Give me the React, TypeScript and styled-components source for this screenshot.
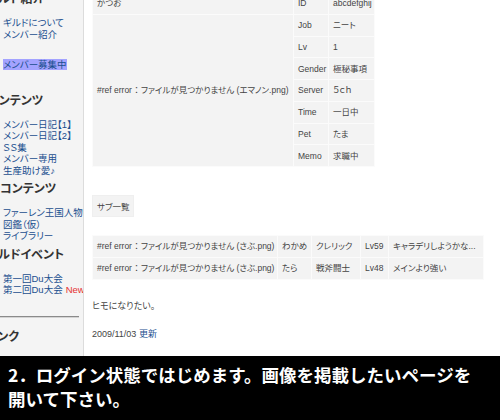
import styled, { createGlobalStyle } from "styled-components";

const GlobalStyle = createGlobalStyle`
  html, body {
    margin: 0;
    padding: 0;
    background: #fff;
  }
  body {
    width: 500px;
    height: 420px;
    overflow: hidden;
    font-family: "Liberation Sans", "Noto Sans CJK JP", sans-serif;
    color: #444;
  }
`;

const Screen = styled.div`
  width: 500px;
  height: 420px;
  display: flex;
  flex-direction: column;
  overflow: hidden;
`;

const Page = styled.div`
  display: flex;
  flex: none;
  height: 356px;
  overflow: hidden;
`;

const Sidebar = styled.aside`
  flex: none;
  width: 83px;
  background: #f4f4f4;
  border-right: 1px solid #dcdcdc;
  overflow: hidden;
`;

const SideInner = styled.div`
  margin-top: -9px;
`;

const SideHeading = styled.h3<{ $shift?: number }>`
  margin: 0 0 10px ${(p) => -(p.$shift ?? 0)}px;
  font-size: 12px;
  line-height: 16px;
  font-weight: bold;
  color: #333;
  white-space: nowrap;
  font-feature-settings: "palt";
`;

const LinkList = styled.ul<{ $after?: number }>`
  list-style: none;
  margin: 0 0 ${(p) => p.$after ?? 5}px;
  padding: 0 0 0 3px;
`;

const LinkItem = styled.li<{ $gap?: number }>`
  margin-top: ${(p) => p.$gap ?? 0}px;
  font-size: 9.5px;
  line-height: 11.5px;
  white-space: nowrap;
  font-feature-settings: "palt";
`;

const SideLink = styled.a<{ $selected?: boolean }>`
  color: #1b4f8f;
  text-decoration: none;
  background: ${(p) => (p.$selected ? "#a3a3ff" : "transparent")};
`;

const NewMark = styled.span`
  margin-left: 3px;
  color: #e53030;
`;

const Rule = styled.hr`
  width: 79px;
  margin: 20px 0 11px;
  border: 0;
  border-top: 1px solid #8a8a8a;
  border-bottom: 1px solid #d4d4d4;
`;

const Main = styled.main`
  flex: 1;
  margin: -8px 0 0 8px;
  font-size: 9px;
  color: #444;
  font-feature-settings: "palt";
`;

const InfoTable = styled.table<{ $w: number; $top?: number }>`
  width: ${(p) => p.$w}px;
  margin-top: ${(p) => p.$top ?? 0}px;
  border-collapse: collapse;
  table-layout: fixed;
  font-size: 8.5px;
`;

const Col = styled.col<{ $w: number }>`
  width: ${(p) => p.$w}px;
`;

const Cell = styled.td`
  height: 20.75px;
  padding: 0 4px;
  background: #f3f3f3;
  border: 1px solid #fbfbfb;
  line-height: 12px;
  white-space: nowrap;
  overflow: hidden;
  vertical-align: middle;
`;

const SubBox = styled.div`
  display: inline-flex;
  align-items: center;
  height: 22px;
  margin-top: 28px;
  padding: 0 4px;
  background: #f3f3f3;
  border: 1px solid #efefef;
  box-sizing: border-box;
  font-size: 8.5px;
`;

const Text = styled.p<{ $top: number }>`
  margin: ${(p) => p.$top}px 0 0;
  line-height: 12px;
`;

const UpdateLink = styled.a`
  color: #1b4f8f;
  text-decoration: none;
`;

const Caption = styled.div`
  flex: 1;
  padding: 6.5px 8px 0;
  background: #000;
  color: #fff;
  font-family: "Noto Sans CJK JP", sans-serif;
  font-size: 17.5px;
  font-weight: bold;
  line-height: 24px;
  white-space: nowrap;
`;

const profile = [
  ["Job", "ニート"],
  ["Lv", "1"],
  ["Gender", "極秘事項"],
  ["Server", "５ｃｈ"],
  ["Time", "一日中"],
  ["Pet", "たま"],
  ["Memo", "求職中"],
];

const subs = [
  ["わかめ", "クレリック", "Lv59", "キャラデリしようかな..."],
  ["たら", "戦斧闘士", "Lv48", "メインより強い"],
];

export default function App() {
  return (
    <Screen>
      <GlobalStyle />
      <Page>
        <Sidebar>
          <SideInner>
            <SideHeading $shift={13}>ギルド紹介</SideHeading>
            <LinkList $after={22}>
              <LinkItem><SideLink>ギルドについて</SideLink></LinkItem>
              <LinkItem><SideLink>メンバー紹介</SideLink></LinkItem>
              <LinkItem $gap={19}><SideLink $selected>メンバー募集中</SideLink></LinkItem>
            </LinkList>

            <SideHeading $shift={13}>コンテンツ</SideHeading>
            <LinkList>
              <LinkItem><SideLink>メンバー日記【1】</SideLink></LinkItem>
              <LinkItem><SideLink>メンバー日記【2】</SideLink></LinkItem>
              <LinkItem><SideLink>ＳＳ集</SideLink></LinkItem>
              <LinkItem><SideLink>メンバー専用</SideLink></LinkItem>
              <LinkItem><SideLink>生産助け愛♪</SideLink></LinkItem>
            </LinkList>

            <SideHeading>コンテンツ</SideHeading>
            <LinkList>
              <LinkItem><SideLink>ファーレン王国人物</SideLink></LinkItem>
              <LinkItem><SideLink>図鑑（仮）</SideLink></LinkItem>
              <LinkItem><SideLink>ライブラリー</SideLink></LinkItem>
            </LinkList>

            <SideHeading $shift={13}>ギルドイベント</SideHeading>
            <LinkList $after={0}>
              <LinkItem><SideLink>第一回Du大会</SideLink></LinkItem>
              <LinkItem>
                <SideLink>第二回Du大会</SideLink>
                <NewMark>New</NewMark>
              </LinkItem>
            </LinkList>

            <Rule />
            <SideHeading $shift={13}>リンク</SideHeading>
          </SideInner>
        </Sidebar>

        <Main>
          <InfoTable $w={282}>
            <colgroup>
              <Col $w={201} />
              <Col $w={35} />
              <Col $w={46} />
            </colgroup>
            <tbody>
              <tr>
                <Cell>かつお</Cell>
                <Cell>ID</Cell>
                <Cell>abcdefghij</Cell>
              </tr>
              {profile.map(([label, value], i) => (
                <tr key={label}>
                  {i === 0 && (
                    <Cell rowSpan={profile.length}>
                      #ref error ： ファイルが見つかりません (エマノン.png)
                    </Cell>
                  )}
                  <Cell>{label}</Cell>
                  <Cell>{value}</Cell>
                </tr>
              ))}
            </tbody>
          </InfoTable>

          <SubBox>サブ一覧</SubBox>

          <InfoTable $w={391} $top={18}>
            <colgroup>
              <Col $w={185} />
              <Col $w={34} />
              <Col $w={49} />
              <Col $w={28} />
              <Col $w={95} />
            </colgroup>
            <tbody>
              {subs.map((row) => (
                <tr key={row[0]}>
                  <Cell>#ref error ： ファイルが見つかりません (さぶ.png)</Cell>
                  {row.map((v) => (
                    <Cell key={v}>{v}</Cell>
                  ))}
                </tr>
              ))}
            </tbody>
          </InfoTable>

          <Text $top={20}>ヒモになりたい。</Text>
          <Text $top={16}>
            2009/11/03 <UpdateLink>更新</UpdateLink>
          </Text>
        </Main>
      </Page>

      <Caption>
        2．ログイン状態ではじめます。画像を掲載したいページを
        <br />
        開いて下さい。
      </Caption>
    </Screen>
  );
}
